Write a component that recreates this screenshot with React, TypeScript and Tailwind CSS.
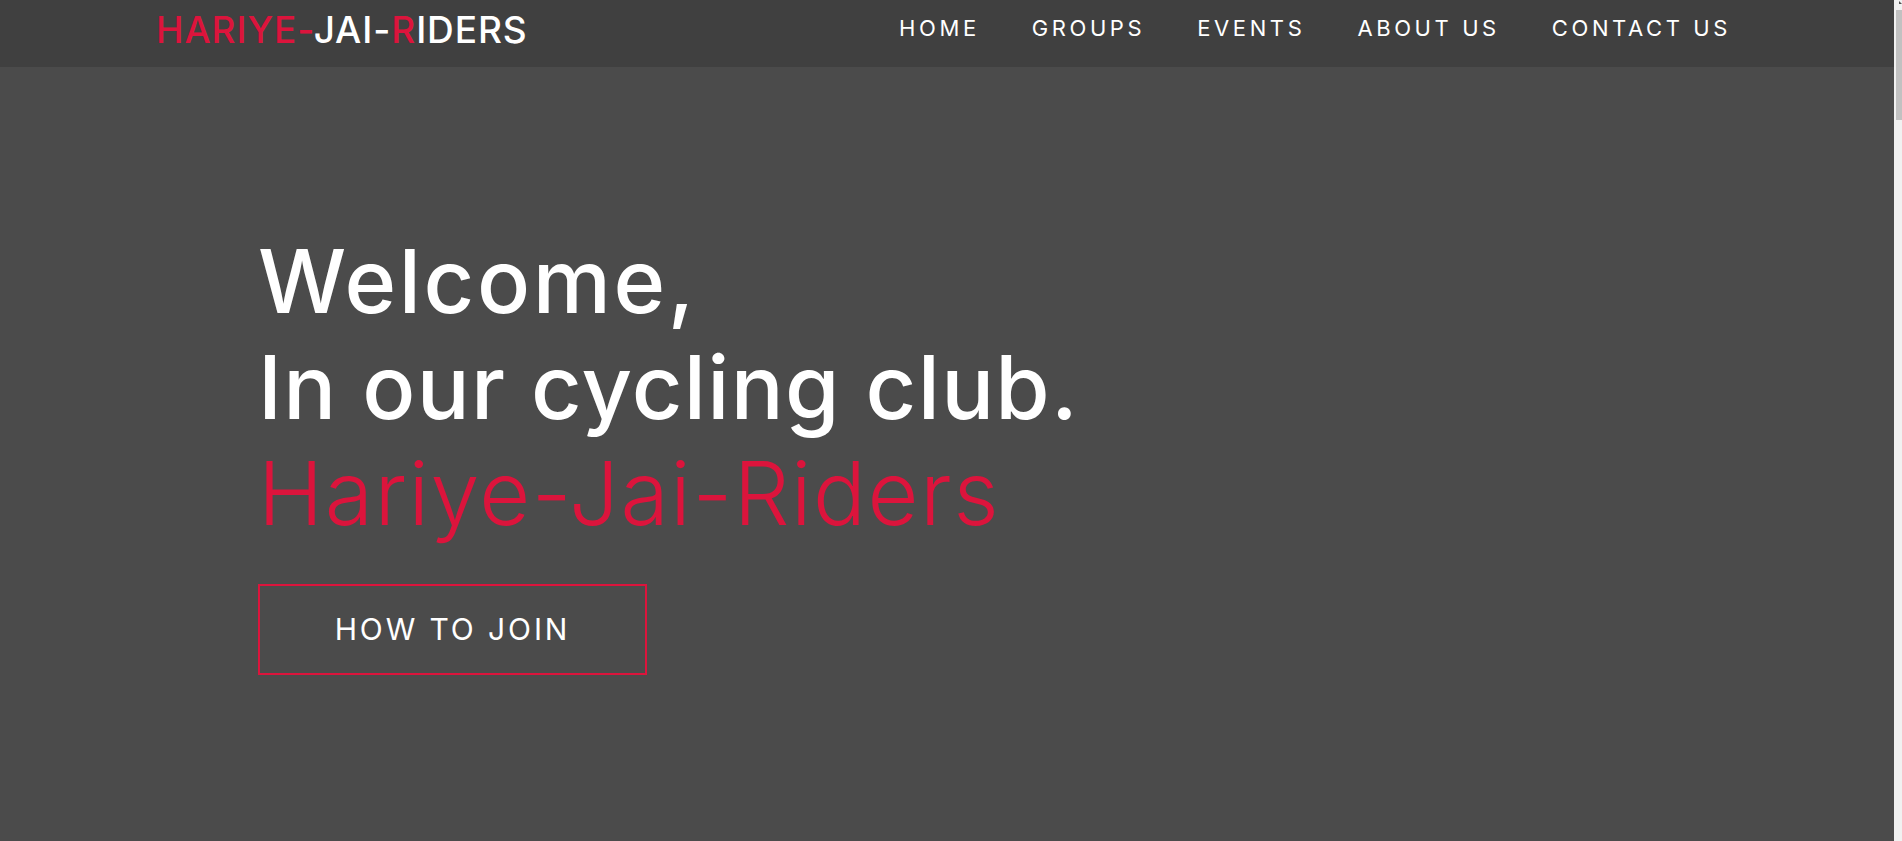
const font = { fontFamily: "Inter, 'Open Sans', sans-serif" }

const links = ["HOME", "GROUPS", "EVENTS", "ABOUT US", "CONTACT US"]

function Header() {
  return (
    <header className="flex h-[67px] shrink-0 items-start justify-between bg-[#404040] pl-[156px] pr-[163px]">
      <a href="#" className="mt-[11px] text-[37px] font-medium leading-none tracking-[0.9px]">
        <span className="text-[#dc143c]">HARIYE-</span>
        <span className="text-white">JAI-</span>
        <span className="text-[#dc143c]">R</span>
        <span className="text-white">IDERS</span>
      </a>
      <nav className="mt-[17px]">
        <ul className="flex gap-[52px]">
          {links.map((l) => (
            <li key={l}>
              <a href="#" className="text-[22px] leading-none tracking-[3.6px] text-white">
                {l}
              </a>
            </li>
          ))}
        </ul>
      </nav>
    </header>
  )
}

function Hero() {
  return (
    <section className="flex-1 bg-[#4b4b4b] pl-[258px] pt-[161px]">
      <h1 className="text-[88px] leading-[106px]">
        <span className="block font-medium tracking-[2.6px] text-white">Welcome,</span>
        <span className="block font-medium tracking-[1.3px] text-white">In our cycling club.</span>
        <span className="block font-light tracking-[1.5px] text-[#dc143c]">Hariye-Jai-Riders</span>
      </h1>
      <a
        href="#"
        className="mt-[38px] flex h-[91px] w-[389px] items-center justify-center border-2 border-[#dc143c] text-[30px] tracking-[2.9px] text-white"
      >
        HOW TO JOIN
      </a>
    </section>
  )
}

export default function App() {
  return (
    <div className="flex h-screen overflow-hidden" style={font}>
      <main className="flex flex-1 flex-col">
        <Header />
        <Hero />
      </main>
      <aside className="flex w-[8px] flex-col bg-[#f1f1f1] pl-[2px]">
        <svg width="6" height="10" viewBox="0 0 6 10" className="shrink-0">
          <path d="M3 1 L6 4 L3 4 Z" fill="#505050" />
        </svg>
        <div className="h-[110px] bg-[#c1c1c1]" />
      </aside>
    </div>
  )
}
